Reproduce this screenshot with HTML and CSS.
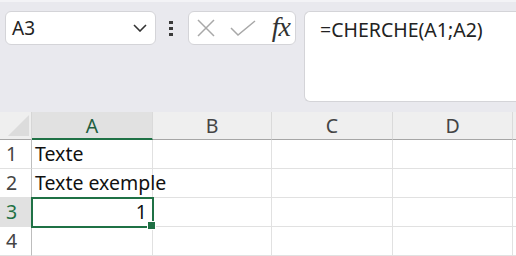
FILE: index.html
```html
<!DOCTYPE html>
<html lang="fr">
    <head>
        <meta charset="UTF-8" />
        <title>Classeur</title>
        <link rel="stylesheet" href="styles.css">
    </head>
    <body>
        <div class="toolbar">
            <div class="namebox">
                <span class="cell-ref">A3</span>
                <svg class="chevron" viewBox="0 0 14 8">
                    <path d="M1,1 L7,7 L13,1" />
                </svg>
            </div>

            <svg class="more" viewBox="0 0 4 16">
                <rect x="0" y="0" width="4" height="3" />
                <rect x="0" y="6" width="4" height="3" />
                <rect x="0" y="12" width="4" height="3" />
            </svg>

            <div class="fxbox">
                <svg class="icon cancel" viewBox="0 0 18 18">
                    <path d="M1,1 L17,17 M17,1 L1,17" />
                </svg>
                <svg class="icon enter" viewBox="0 0 26 16">
                    <path d="M1,8 L8,15 L25,1" />
                </svg>
                <span class="fx">fx</span>
            </div>

            <div class="formula">=CHERCHE(A1;A2)</div>
        </div>

        <div class="sheet">
            <div class="corner">
                <svg viewBox="0 0 24 24">
                    <polygon points="1,23 23,23 23,1" />
                </svg>
            </div>
            <div class="col-head selected">A</div>
            <div class="col-head">B</div>
            <div class="col-head">C</div>
            <div class="col-head">D</div>
            <div class="col-head"></div>

            <div class="row-head">1</div>
            <div class="cell">Texte</div>
            <div class="cell"></div>
            <div class="cell"></div>
            <div class="cell"></div>
            <div class="cell"></div>

            <div class="row-head">2</div>
            <div class="cell overflow">Texte exemple</div>
            <div class="cell"></div>
            <div class="cell"></div>
            <div class="cell"></div>
            <div class="cell"></div>

            <div class="row-head selected">3</div>
            <div class="cell number active">1</div>
            <div class="cell"></div>
            <div class="cell"></div>
            <div class="cell"></div>
            <div class="cell"></div>

            <div class="row-head">4</div>
            <div class="cell"></div>
            <div class="cell"></div>
            <div class="cell"></div>
            <div class="cell"></div>
            <div class="cell"></div>
        </div>
    </body>
</html>
```

FILE: styles.css
```css
* {
    margin: 0;
    padding: 0;
    box-sizing: border-box;
}

body {
    font-family: "Noto Sans", "Open Sans", sans-serif;
    background: #e9e9ee;
    width: 516px;
    height: 256px;
    overflow: hidden;
    color: #222;
}

.toolbar {
    display: flex;
    align-items: flex-start;
    height: 112px;
    padding: 9px 0 0 5px;
    border-top: 2px solid #f3f3f6;
}

.namebox {
    width: 151px;
    height: 34px;
    background: #fff;
    border: 1px solid #d4d4d8;
    border-radius: 6px;
    display: flex;
    align-items: center;
    justify-content: space-between;
    padding: 0 8px 0 6px;
}

.cell-ref {
    font-size: 19px;
    color: #222;
}

.chevron {
    width: 14px;
    height: 8px;
    fill: none;
    stroke: #333;
    stroke-width: 1.6;
}

.more {
    width: 4px;
    height: 16px;
    margin: 10px 15px 0 13px;
    fill: #3a3a3a;
}

.fxbox {
    width: 108px;
    height: 34px;
    background: #fff;
    border: 1px solid #d4d4d8;
    border-radius: 6px;
    display: flex;
    align-items: center;
    padding: 0 5px 0 8px;
}

.icon {
    fill: none;
    stroke: #a8a8a8;
    stroke-width: 1.5;
}

.icon.cancel {
    width: 18px;
    height: 18px;
}

.icon.enter {
    width: 26px;
    height: 16px;
    margin-left: 15px;
}

.fx {
    margin-left: auto;
    font-family: "Liberation Serif", "DejaVu Serif", serif;
    font-style: italic;
    font-size: 28px;
    color: #333;
    letter-spacing: -1px;
    line-height: 1;
    margin-top: -2px;
}

.formula {
    flex: 1;
    height: 91px;
    margin-left: 8px;
    background: #fff;
    border: 1px solid #d4d4d8;
    border-right: none;
    border-radius: 6px 0 0 6px;
    padding: 4px 0 0 15px;
    font-size: 19.5px;
    color: #222;
}

.sheet {
    display: grid;
    grid-template-columns: 32px 121px 119px 121px 120px 1fr;
    grid-template-rows: 28px repeat(4, 29px);
    background: #fff;
    font-size: 19.5px;
}

.corner {
    background: #efefef;
    border-right: 1px solid #d6d6d6;
    border-bottom: 1px solid #a6a6a6;
    padding: 2px 1px 2px 7px;
}

.corner svg {
    display: block;
    width: 23px;
    height: 23px;
    fill: #dcdcdc;
}

.col-head {
    background: #efefef;
    border-right: 1px solid #dadada;
    border-bottom: 1px solid #a6a6a6;
    text-align: center;
    line-height: 27px;
    color: #444;
}

.col-head.selected {
    background: #e1e1e1;
    border-bottom: 2px solid #1f7145;
    color: #1e5e40;
}

.row-head {
    background: #fff;
    border-right: 1px solid #bdbdbd;
    border-bottom: 1px solid #e1e1e1;
    text-align: center;
    padding-right: 8px;
    line-height: 28px;
    color: #444;
}

.row-head.selected {
    background: #e1e1e1;
    color: #1f7145;
}

.cell {
    border-right: 1px solid #e1e1e1;
    border-bottom: 1px solid #e1e1e1;
    padding: 0 5px 0 3px;
    line-height: 28px;
    color: #111;
    white-space: nowrap;
}

.cell.overflow {
    overflow: visible;
    position: relative;
    z-index: 1;
}

.cell.number {
    text-align: right;
}

.cell.active {
    position: relative;
    z-index: 2;
    outline: 2px solid #1f7145;
    outline-offset: -1px;
}

.cell.active::after {
    content: "";
    position: absolute;
    right: -4px;
    bottom: -4px;
    width: 7px;
    height: 7px;
    background: #1f7145;
    border: 1px solid #fff;
}
```
